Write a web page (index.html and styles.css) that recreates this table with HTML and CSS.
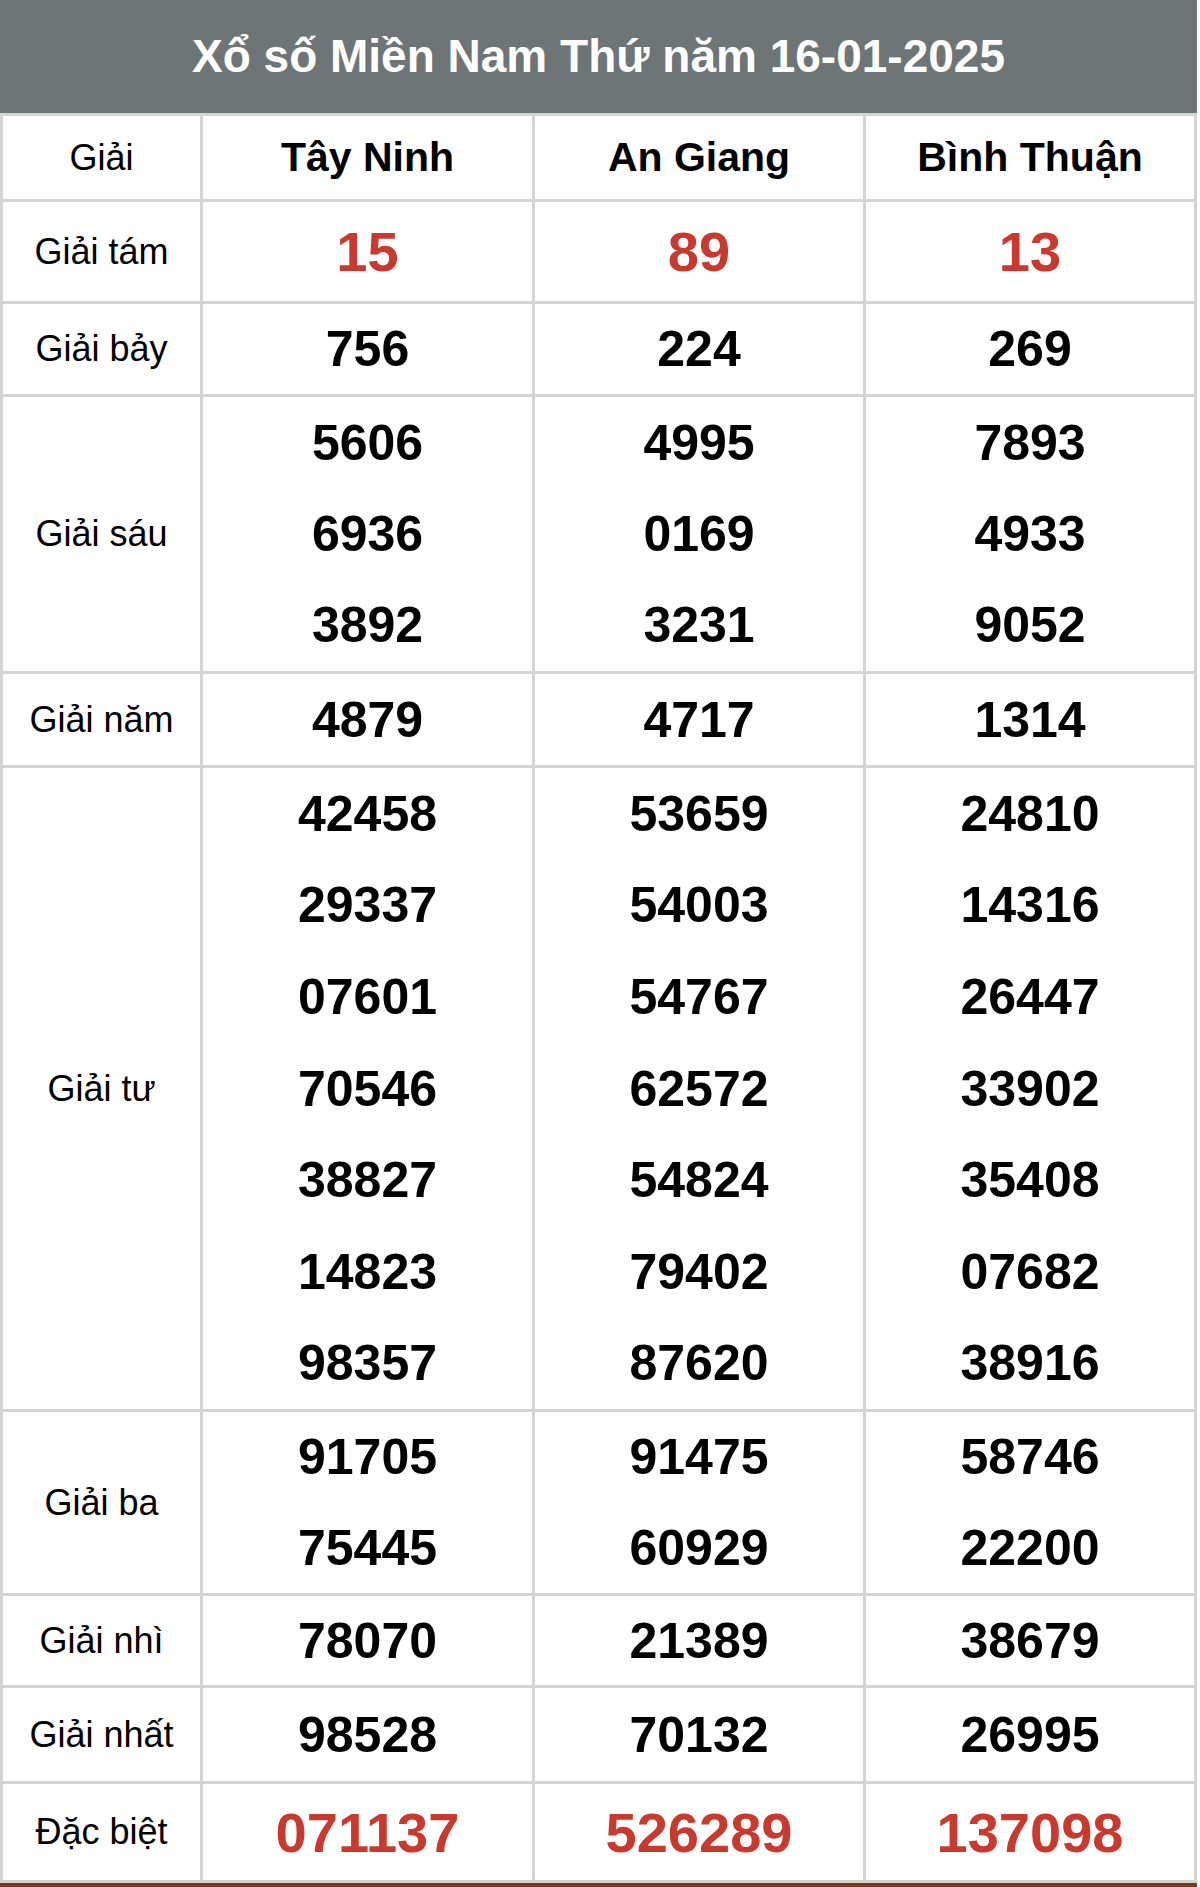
FILE: index.html
```html
<!DOCTYPE html>
<html lang="vi">
<head>
<meta charset="utf-8">
<title>Xổ số Miền Nam Thứ năm 16-01-2025</title>
<link rel="stylesheet" href="styles.css">
</head>
<body>
<div class="board">
  <div class="title">Xổ số Miền Nam Thứ năm 16-01-2025</div>
  <div class="grid">
    <div class="cell label r-head">Giải</div>
    <div class="cell prov">Tây Ninh</div>
    <div class="cell prov">An Giang</div>
    <div class="cell prov">Bình Thuận</div>

    <div class="cell label r-tam">Giải tám</div>
    <div class="cell nums red"><div class="n">15</div></div>
    <div class="cell nums red"><div class="n">89</div></div>
    <div class="cell nums red"><div class="n">13</div></div>

    <div class="cell label r-bay">Giải bảy</div>
    <div class="cell nums"><div class="n">756</div></div>
    <div class="cell nums"><div class="n">224</div></div>
    <div class="cell nums"><div class="n">269</div></div>

    <div class="cell label r-sau">Giải sáu</div>
    <div class="cell nums"><div class="n">5606</div><div class="n">6936</div><div class="n">3892</div></div>
    <div class="cell nums"><div class="n">4995</div><div class="n">0169</div><div class="n">3231</div></div>
    <div class="cell nums"><div class="n">7893</div><div class="n">4933</div><div class="n">9052</div></div>

    <div class="cell label r-nam">Giải năm</div>
    <div class="cell nums"><div class="n">4879</div></div>
    <div class="cell nums"><div class="n">4717</div></div>
    <div class="cell nums"><div class="n">1314</div></div>

    <div class="cell label r-tu">Giải tư</div>
    <div class="cell nums"><div class="n">42458</div><div class="n">29337</div><div class="n">07601</div><div class="n">70546</div><div class="n">38827</div><div class="n">14823</div><div class="n">98357</div></div>
    <div class="cell nums"><div class="n">53659</div><div class="n">54003</div><div class="n">54767</div><div class="n">62572</div><div class="n">54824</div><div class="n">79402</div><div class="n">87620</div></div>
    <div class="cell nums"><div class="n">24810</div><div class="n">14316</div><div class="n">26447</div><div class="n">33902</div><div class="n">35408</div><div class="n">07682</div><div class="n">38916</div></div>

    <div class="cell label r-ba">Giải ba</div>
    <div class="cell nums"><div class="n">91705</div><div class="n">75445</div></div>
    <div class="cell nums"><div class="n">91475</div><div class="n">60929</div></div>
    <div class="cell nums"><div class="n">58746</div><div class="n">22200</div></div>

    <div class="cell label r-nhi">Giải nhì</div>
    <div class="cell nums"><div class="n">78070</div></div>
    <div class="cell nums"><div class="n">21389</div></div>
    <div class="cell nums"><div class="n">38679</div></div>

    <div class="cell label r-nhat">Giải nhất</div>
    <div class="cell nums"><div class="n">98528</div></div>
    <div class="cell nums"><div class="n">70132</div></div>
    <div class="cell nums"><div class="n">26995</div></div>

    <div class="cell label r-db">Đặc biệt</div>
    <div class="cell nums red"><div class="n">071137</div></div>
    <div class="cell nums red"><div class="n">526289</div></div>
    <div class="cell nums red"><div class="n">137098</div></div>
  </div>
  <div class="footer-line"></div>
</div>
</body>
</html>
```
FILE: styles.css
```css
html, body {
  margin: 0;
  padding: 0;
  background: #ffffff;
}

.board {
  width: 1197px;
  font-family: "Liberation Sans", Arial, sans-serif;
  color: #000000;
}

.title {
  height: 113px;
  background: #6e7577;
  color: #ffffff;
  font-size: 46px;
  font-weight: bold;
  display: flex;
  align-items: center;
  justify-content: center;
  padding-bottom: 2px;
  box-sizing: border-box;
}

.grid {
  display: grid;
  grid-template-columns: 197px 329px 328px 328px;
  grid-template-rows: 83px 99px 90px 274px 91px 641px 181px 89px 93px 96px;
  gap: 3px;
  padding: 3px;
  background: #d4d4d4;
}

.cell {
  background: #ffffff;
  display: flex;
  align-items: center;
  justify-content: center;
}

.label {
  font-size: 36px;
  font-weight: normal;
}

.prov {
  font-size: 41px;
  font-weight: bold;
}

.nums {
  flex-direction: column;
  align-items: stretch;
  font-size: 50px;
  font-weight: bold;
}

.nums .n {
  flex: 1;
  display: flex;
  align-items: center;
  justify-content: center;
}

.red {
  color: #c9392d;
  font-size: 56px;
}

.footer-line {
  height: 4px;
  background: #7a3b12;
}
```
